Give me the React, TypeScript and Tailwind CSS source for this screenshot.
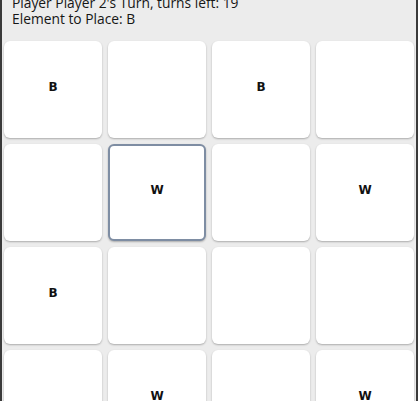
import React from "react";

const cells = [
  "B", "", "B", "",
  "", "W", "", "W",
  "B", "", "", "",
  "", "W", "", "W",
];

export default function App() {
  return (
    <div className="w-[418px] h-[401px] overflow-hidden bg-[#ececec] border-x-2 border-[#3a3a3a]" style={{ fontFamily: '"Open Sans", sans-serif' }}>
      <div className="-mt-[5px] px-[10px] text-[13.8px] leading-[16px] font-medium text-[#161616]">
        <div>Player Player 2's Turn, turns left: 19</div>
        <div>Element to Place: B</div>
      </div>
      <div className="mt-[14px] px-[2px] grid grid-cols-4 gap-x-[6px] gap-y-[6px]">
        {cells.map((c, i) => (
          <div
            key={i}
            className={
              "h-[97px] rounded-[6px] bg-white flex items-center justify-center pb-[5px] text-[12px] font-bold text-[#111] shadow-[0_1px_2px_rgba(0,0,0,0.28)] " +
              (i === 5 ? "border-2 border-[#7e8da3]" : "")
            }
            style={{ fontFamily: '"DejaVu Sans", sans-serif' }}
          >
            {c}
          </div>
        ))}
      </div>
    </div>
  );
}
